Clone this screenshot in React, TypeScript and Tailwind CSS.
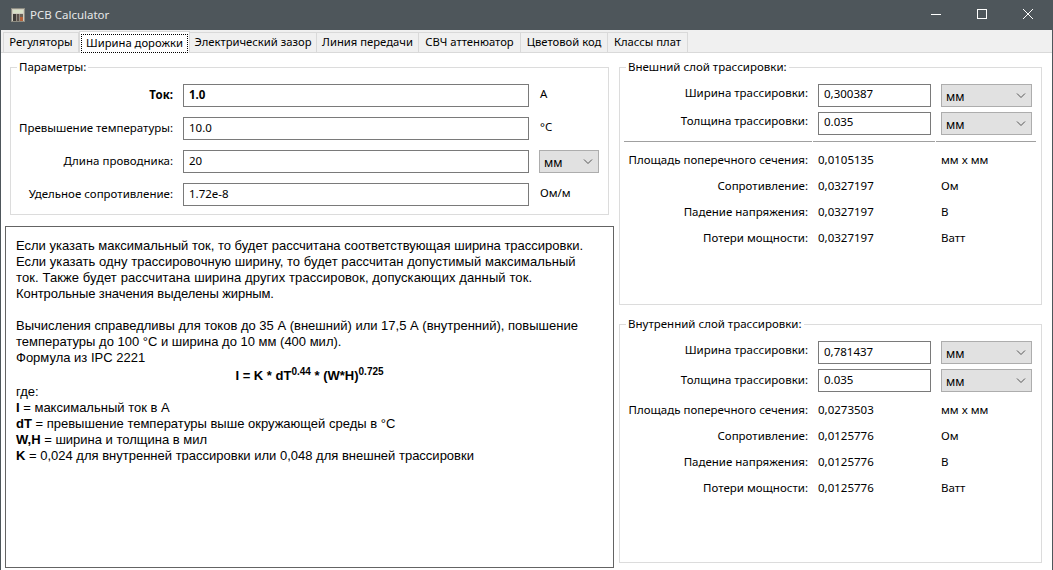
const ui = "font-['Noto_Sans','Open_Sans',sans-serif]";

const tabs = [
  { label: "Регуляторы", w: "w-[76px]" },
  { label: "Ширина дорожки", w: "w-[111px]", active: true },
  { label: "Электрический зазор", w: "w-[127px]" },
  { label: "Линия передачи", w: "w-[102px]" },
  { label: "СВЧ аттенюатор", w: "w-[102px]" },
  { label: "Цветовой код", w: "w-[87px]" },
  { label: "Классы плат", w: "w-[80px]" },
];

function TitleIcon() {
  return (
    <svg width="14" height="14" viewBox="0 0 14 14" className="shrink-0">
      <rect x="0.5" y="0.5" width="13" height="13" fill="#cfcdbf" stroke="#8d8c82" />
      <rect x="2" y="2" width="10" height="3" fill="#d9e2c8" />
      <rect x="2" y="6" width="3" height="7" fill="#3f3d39" />
      <rect x="5.5" y="6" width="3" height="7" fill="#5b514a" />
      <rect x="9" y="6" width="3" height="3" fill="#6b6358" />
      <rect x="9" y="9" width="3" height="4" fill="#b5623a" />
    </svg>
  );
}

function TitleBar() {
  return (
    <div className="flex h-[30px] shrink-0 items-center bg-[#4e565b] pl-[10px]">
      <TitleIcon />
      <span className={`ml-[5px] text-[11.5px] text-[#e6e8e9] ${ui}`}>PCB Calculator</span>
      <div className="ml-auto flex h-full pb-[2px] pr-[1px]">
        <div className="flex h-full w-[46px] items-center justify-center">
          <svg width="10" height="10" viewBox="0 0 10 10">
            <path d="M0 5.5H10" stroke="#fff" strokeWidth="1" />
          </svg>
        </div>
        <div className="flex h-full w-[46px] items-center justify-center">
          <svg width="10" height="10" viewBox="0 0 10 10">
            <rect x="0.5" y="0.5" width="9" height="9" fill="none" stroke="#fff" />
          </svg>
        </div>
        <div className="flex h-full w-[46px] items-center justify-center">
          <svg width="10" height="10" viewBox="0 0 10 10">
            <path d="M0 0L10 10M10 0L0 10" stroke="#fff" strokeWidth="1" />
          </svg>
        </div>
      </div>
    </div>
  );
}

function TabBar() {
  return (
    <div className="flex h-[23px] shrink-0 items-end border-b border-[#d9d9d9] bg-[#f0f0f0] pl-[2px]">
      {tabs.map((t, i) =>
        t.active ? (
          <div
            key={t.label}
            className={`${t.w} -mb-px flex h-[22px] items-start justify-center whitespace-nowrap border border-b-0 border-[#d9d9d9] bg-white px-px pt-[2px] text-[11.25px] text-black ${ui}`}
          >
            <span className="flex h-[19px] w-full items-center justify-center border border-dotted border-black">{t.label}</span>
          </div>
        ) : (
          <div
            key={t.label}
            className={`${t.w} flex h-[20px] items-center justify-center whitespace-nowrap border-r border-t border-[#d9d9d9] text-[11.25px] text-black ${i === 0 ? "border-l" : ""} ${ui}`}
          >
            {t.label}
          </div>
        )
      )}
    </div>
  );
}

function Field({ value, bold, pad = "pb-[2px]" }: { value: string; bold?: boolean; pad?: string }) {
  return (
    <div
      className={`flex h-[23px] w-full items-center border border-[#7a7a7a] bg-white pl-[5px] text-[11.5px] text-black ${pad} ${bold ? "font-bold" : ""} ${ui}`}
    >
      {value}
    </div>
  );
}

function Unit() {
  return (
    <div className={`flex h-[23px] w-full items-center justify-between border border-[#adadad] bg-[#e1e1e1] pl-[4px] pr-[5px] text-[12px] text-black ${ui}`}>
      <span className="pt-[2px]">мм</span>
      <svg width="10" height="6" viewBox="0 0 10 6">
        <path d="M1 0.5L5 4.5L9 0.5" fill="none" stroke="#555" strokeWidth="1" />
      </svg>
    </div>
  );
}

function Label({ children, bold, pad = "" }: { children: string; bold?: boolean; pad?: string }) {
  return (
    <span className={`whitespace-nowrap text-right text-[11.5px] text-black ${pad} ${bold ? "font-bold" : ""} ${ui}`}>{children}</span>
  );
}

function ParamsGroup() {
  const rows = [
    { label: "Ток:", value: "1.0", unit: "А", bold: true },
    { label: "Превышение температуры:", value: "10.0", unit: "°C" },
    { label: "Длина проводника:", value: "20", select: true },
    { label: "Удельное сопротивление:", value: "1.72e-8", unit: "Ом/м" },
  ];
  return (
    <fieldset className="ml-[9px] h-[156px] w-[599px] border border-[#dcdcdc] pl-[8px]">
      <legend className={`-ml-[2px] px-[2px] text-[11.5px] leading-[16px] text-black ${ui}`}>Параметры:</legend>
      <div className="mt-[9px] grid grid-cols-[154px_346px_60px] items-center gap-x-[10px] gap-y-[10px]">
        {rows.map((r) => (
          <div key={r.label} className="contents">
            <Label bold={r.bold} pad="pb-[2px]">{r.label}</Label>
            <Field value={r.value} bold={r.bold} />
            {r.select ? (
              <Unit />
            ) : (
              <span className={`pb-[3px] pl-px text-[11.5px] text-black ${ui}`}>{r.unit}</span>
            )}
          </div>
        ))}
      </div>
    </fieldset>
  );
}

function HelpText() {
  return (
    <div className="ml-[4px] mt-[11px] h-[342px] w-[609px] border border-[#646464] bg-white pl-[10px] pt-[11px] font-['Liberation_Sans',Arial,sans-serif] text-[13px] leading-[16px] text-black">
      <div>Если указать максимальный ток, то будет рассчитана соответствующая ширина трассировки.</div>
      <div className="tracking-[0.06px]">Если указать одну трассировочную ширину, то будет рассчитан допустимый максимальный</div>
      <div className="tracking-[0.1px]">ток. Также будет рассчитана ширина других трассировок, допускающих данный ток.</div>
      <div className="tracking-[-0.08px]">Контрольные значения выделены жирным.</div>
      <div className="h-[16px]" />
      <div>Вычисления справедливы для токов до 35 А (внешний) или 17,5 А (внутренний), повышение</div>
      <div>температуры до 100 °C и ширина до 10 мм (400 мил).</div>
      <div>Формула из IPC 2221</div>
      <div className="pr-[10px] pt-[2px] text-center font-bold">
        I = K * dT<sup className="text-[10px]">0.44</sup> * (W*H)<sup className="text-[10px]">0.725</sup>
      </div>
      <div>где:</div>
      <div><b>I</b> = максимальный ток в А</div>
      <div><b>dT</b> = превышение температуры выше окружающей среды в °C</div>
      <div><b>W,H</b> = ширина и толщина в мил</div>
      <div><b>K</b> = 0,024 для внутренней трассировки или 0,048 для внешней трассировки</div>
    </div>
  );
}

function Divider() {
  return (
    <div className="mb-[5px] mt-[5px] flex gap-[1px]">
      <div className="h-px w-[188px] bg-[#a0a0a0]" />
      <div className="h-px w-[122px] bg-[#a0a0a0]" />
      <div className="h-px w-[100px] bg-[#a0a0a0]" />
    </div>
  );
}

function TraceGroup({
  title,
  width,
  values,
  h,
  divider,
  className,
  labelPads,
  fieldPads,
}: {
  title: string;
  width: string;
  values: string[];
  h: string;
  divider?: boolean;
  className?: string;
  labelPads: string[];
  fieldPads: string[];
}) {
  const names = ["Площадь поперечного сечения:", "Сопротивление:", "Падение напряжения:", "Потери мощности:"];
  const units = ["мм x мм", "Ом", "В", "Ватт"];
  return (
    <fieldset className={`${h} ${className ?? ""} w-[423px] border border-[#dcdcdc] pl-[4px]`}>
      <legend className={`ml-[2px] px-[2px] text-[11.5px] leading-[16px] text-black ${ui}`}>{title}</legend>
      <div className="mt-[9px] grid grid-cols-[184px_113px_91px] items-center gap-x-[10px] gap-y-[5px]">
        <Label pad={labelPads[0]}>Ширина трассировки:</Label>
        <Field value={width} pad={fieldPads[0]} />
        <Unit />
        <Label pad={labelPads[1]}>Толщина трассировки:</Label>
        <Field value="0.035" pad={fieldPads[1]} />
        <Unit />
      </div>
      {divider ? <Divider /> : <div className="h-[4px]" />}
      <div className="grid grid-cols-[184px_113px_91px] items-center gap-x-[10px]">
        {names.map((n, i) => (
          <div key={n} className="contents">
            <div className="flex h-[26px] items-center justify-end"><Label>{n}</Label></div>
            <span className={`text-[11.5px] text-black ${ui}`}>{values[i]}</span>
            <span className={`text-[11.5px] text-black ${ui}`}>{units[i]}</span>
          </div>
        ))}
      </div>
    </fieldset>
  );
}

export default function App() {
  return (
    <div className="flex h-[570px] w-[1053px] flex-col overflow-hidden border-x border-[#4e565b] bg-white">
      <TitleBar />
      <TabBar />
      <div className="flex min-h-0 flex-1">
        <div className="w-[618px] shrink-0 pt-[6px]">
          <ParamsGroup />
          <HelpText />
        </div>
        <div className="flex flex-col pt-[6px]">
          <TraceGroup
            title="Внешний слой трассировки:"
            width="0,300387"
            values={["0,0105135", "0,0327197", "0,0327197", "0,0327197"]}
            h="h-[246px]"
            divider
            labelPads={["pb-[6px]", "pb-[6px]"]}
            fieldPads={["pb-[4px]", "pb-[4px]"]}
          />
          <TraceGroup
            title="Внутренний слой трассировки:"
            width="0,781437"
            values={["0,0273503", "0,0125776", "0,0125776", "0,0125776"]}
            h="h-[247px]"
            className="mt-[11px]"
            labelPads={["pb-[6px]", "pb-[2px]"]}
            fieldPads={["pb-[2px]", "pb-[2px]"]}
          />
        </div>
      </div>
    </div>
  );
}
